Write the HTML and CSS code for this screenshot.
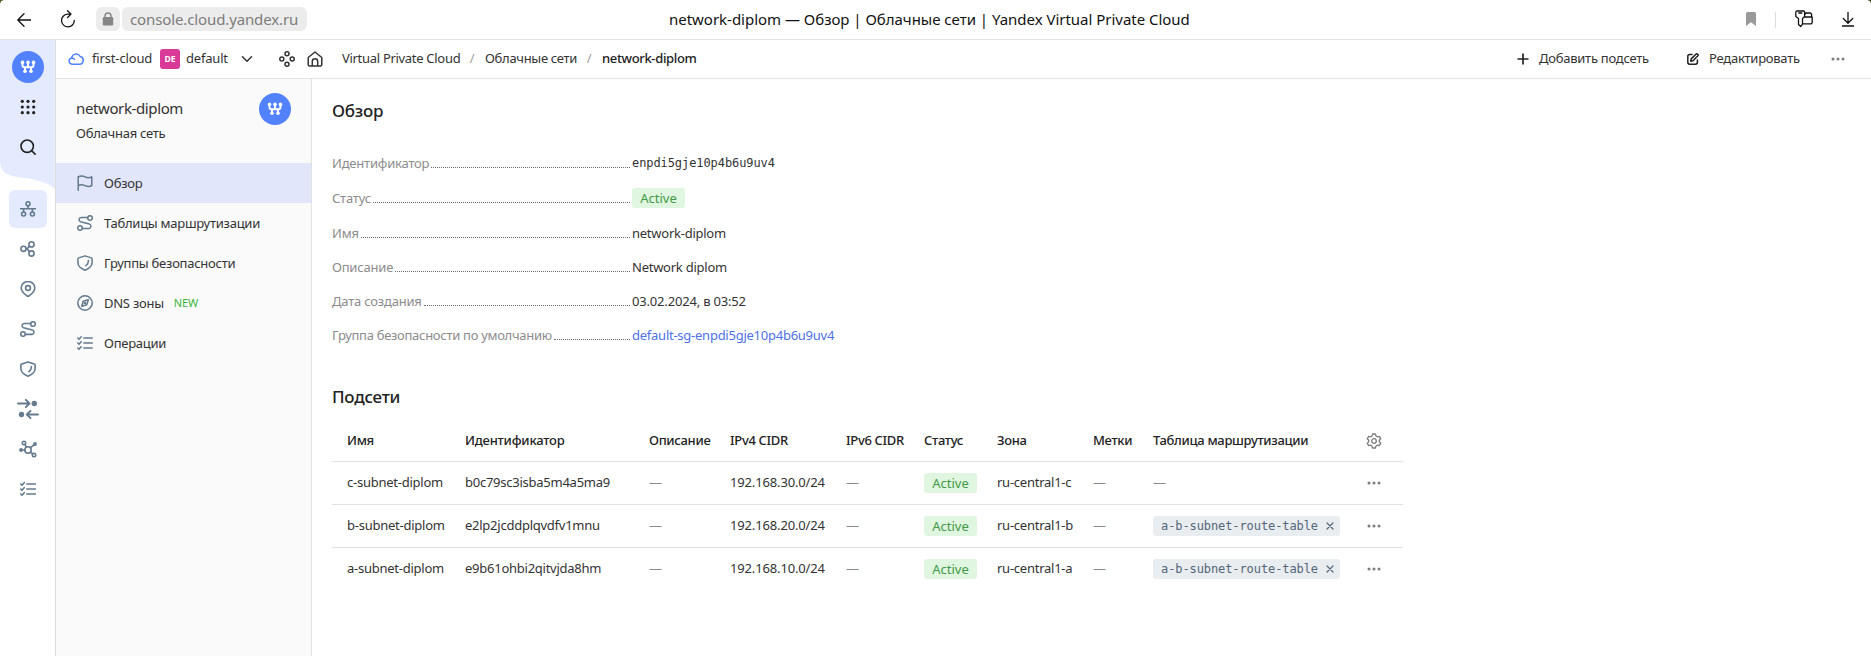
FILE: index.html
```html
<!DOCTYPE html>
<html lang="ru">
<head>
<meta charset="utf-8">
<title>network-diplom — Обзор</title>
<link rel="stylesheet" href="styles.css">
</head>
<body>
<svg class="sprite" aria-hidden="true">
  <symbol id="i-vpc" viewBox="0 0 32 32"><g fill="none" stroke="#fff" stroke-width="1.900"><path d="M10.500 11.500v2.700q0 2 2 2h7q2 0 2-2v-2.700M16 11.500v4.700M13 16v4M19 16v4"/></g><g fill="#fff"><circle cx="10.500" cy="11.400" r="1.800"/><circle cx="16" cy="11.400" r="1.800"/><circle cx="21.500" cy="11.400" r="1.800"/><circle cx="13" cy="20.300" r="1.800"/><circle cx="19" cy="20.300" r="1.800"/></g></symbol>
  <symbol id="i-net" viewBox="0 0 16 16"><circle cx="8" cy="2.700" r="2"/><circle cx="3.600" cy="13" r="2"/><circle cx="12.400" cy="13" r="2"/><path d="M8 4.700v3M.5 7.700h15M3.600 7.700V11M12.400 7.700V11"/></symbol>
  <symbol id="i-share" viewBox="0 0 16 16"><circle cx="3.500" cy="7.800" r="2.600"/><circle cx="11.500" cy="3.400" r="2.600"/><circle cx="11.500" cy="12.500" r="2.600"/><path d="M6.100 7.800h1.200L9.400 5M7.300 7.800l2 3"/></symbol>
  <symbol id="i-pin" viewBox="0 0 16 16"><path d="M8 15.600C5.500 13.800 1.200 11.300 1.200 7A6.800 6.500 0 0 1 14.800 7C14.800 11.300 10.500 13.800 8 15.600z"/><circle cx="8" cy="7" r="2.400"/></symbol>
  <symbol id="i-route" viewBox="0 0 16 16"><circle cx="13" cy="3" r="2.300"/><circle cx="3" cy="13" r="2.300"/><path d="M10.700 2.500H4.200a2.200 2.200 0 0 0-.6 4.300l8.800 2.300a2.200 2.200 0 0 1-.6 4.300H5.300"/></symbol>
  <symbol id="i-shield" viewBox="0 0 16 16"><path d="M8 .9 14.300 2.900Q15.100 3.200 15.100 4V7.500C15.100 11.500 11 14 8 15.200 5 14 .9 11.500 .9 7.500V4Q.9 3.200 1.700 2.900zM11.300 5.500C11.500 7.800 10.700 9.500 9 10.700"/></symbol>
  <symbol id="i-checks" viewBox="0 0 16 16"><path d="M6.800 3h8.500M6.800 8h8.500M6.800 13h8.500M.8 3l1.200 1.200L4.200 1.700M.8 8l1.200 1.200L4.200 6.700M.8 13l1.200 1.200 2.200-2.500"/></symbol>
  <symbol id="i-dots" viewBox="0 0 16 16"><g fill="currentColor" stroke="none"><circle cx="3" cy="8" r="1.500"/><circle cx="8" cy="8" r="1.500"/><circle cx="13" cy="8" r="1.500"/></g></symbol>
  <symbol id="i-x" viewBox="0 0 8 8"><path d="M1 1l6 6M7 1 1 7"/></symbol>
</svg>

<div class="browser">
  <i class="corner corner-l"></i><i class="corner corner-r"></i>
  <svg class="back ico thin" viewBox="0 0 14 14"><path d="M14 7H.8M7 .8.8 7 7 13.200"/></svg>
  <svg class="reload ico thin" viewBox="0 0 16 18"><path d="M7.500 4.100a6.400 6.400 0 1 0 6.800 6.400M7.300 4.100H11M7.500.8 11 4.100 7.600 7.500"/></svg>
  <span class="lock"><svg viewBox="0 0 12 14"><path d="M3 7V4a3 3 0 0 1 6 0v3" fill="none" stroke="#858585" stroke-width="1.400"/><rect x=".8" y="5" width="10.400" height="8.500" rx="1.300" fill="#858585"/></svg></span>
  <span class="url">console.cloud.yandex.ru</span>
  <span class="page-title">network-diplom — Обзор | Облачные сети | Yandex Virtual Private Cloud</span>
  <svg class="bookmark" viewBox="0 0 10 14"><path d="M0 1.500Q0 0 1.500 0h7Q10 0 10 1.500V14L5 10.300 0 14z" fill="#999"/></svg>
  <i class="vsep"></i>
  <svg class="key ico" viewBox="0 0 18 18"><path d="M1.500 1h7.300l.8 1v4.500L7.500 8.500v5.700l-1.800 2.400-2.200-2V8.500L.8 6.500V2zM3.800 3h3M10 4.300l1-1.300h4.300l1.300 1.300v2.300M8 13.800h8.200l1-1V7H9.600"/></svg>
  <svg class="download ico thin" viewBox="0 0 12 15"><path d="M6 0v11M1.300 6.500 6 11.200l4.700-4.700M0 14h12"/></svg>
</div>

<div class="app">
  <nav class="rail">
    <svg class="rail-wave" viewBox="0 0 55 150"><path d="M0 0H55V149C49 143 41 141 26 138C9 136.500 0 134 0 120z" fill="#e4ebff"/></svg>
    <a class="logo"><svg viewBox="0 0 32 32"><use href="#i-vpc"/></svg></a>
    <a class="slot dark"><svg viewBox="0 0 16 16" fill="currentColor"><circle cx="2.300" cy="2.300" r="1.600"/><circle cx="8" cy="2.300" r="1.600"/><circle cx="13.700" cy="2.300" r="1.600"/><circle cx="2.300" cy="8" r="1.600"/><circle cx="8" cy="8" r="1.600"/><circle cx="13.700" cy="8" r="1.600"/><circle cx="2.300" cy="13.700" r="1.600"/><circle cx="8" cy="13.700" r="1.600"/><circle cx="13.700" cy="13.700" r="1.600"/></svg></a>
    <a class="slot dark"><svg class="ico" viewBox="0 0 16 16"><circle cx="7.200" cy="7.200" r="6.200"/><path d="m11.700 11.700 3.400 3.400"/></svg></a>
    <div class="rail-items">
      <a class="slot active"><svg class="ico"><use href="#i-net"/></svg></a>
      <a class="slot"><svg class="ico"><use href="#i-share"/></svg></a>
      <a class="slot"><svg class="ico"><use href="#i-pin"/></svg></a>
      <a class="slot"><svg class="ico"><use href="#i-route"/></svg></a>
      <a class="slot"><svg class="ico"><use href="#i-shield"/></svg></a>
      <a class="slot"><svg class="ico big heavy" viewBox="0 0 22 22"><path d="M1 5.500h11M8.800 1.800l3.700 3.700-3.700 3.700M21 16.500H10M13.500 12.800 9.800 16.500l3.700 3.700"/><g fill="currentColor" stroke="none"><circle cx="17.300" cy="5.500" r="2.700"/><circle cx="4.500" cy="16.500" r="2.700"/></g></svg></a>
      <a class="slot"><svg class="ico hub" viewBox="0 0 18 18"><circle cx="9" cy="10" r="3.200"/><circle cx="5" cy="3" r="1.700"/><circle cx="15" cy="15" r="1.700"/><path d="m5.900 4.500 1.600 2.700M11.200 7.800 16 4M5.800 10H2M11.500 12.200l2.200 1.700"/><g fill="currentColor" stroke="none"><circle cx="16" cy="4" r="1.900"/><circle cx="2" cy="10" r="1.900"/></g></svg></a>
      <a class="slot"><svg class="ico"><use href="#i-checks"/></svg></a>
    </div>
  </nav>

  <div class="workspace">
    <header class="topbar">
      <svg class="cloud ico" viewBox="0 0 16 12"><path d="M4 11.200A3.200 3.200 0 0 1 3.600 4.900 4.600 4.600 0 0 1 12.200 3.500 3.900 3.900 0 0 1 11.600 11.200zM3.600 4.900a3.300 3.300 0 0 1 2.900 1.500"/></svg>
      <span class="cloud-name">first-cloud</span>
      <span class="folder-badge">DE</span>
      <span class="folder-name">default</span>
      <svg class="chev ico" viewBox="0 0 10 6"><path d="M.5.7 5 5.200 9.500.7"/></svg>
      <svg class="diamonds ico" viewBox="0 0 16 16"><circle cx="8" cy="2.800" r="2"/><circle cx="2.800" cy="8" r="2"/><circle cx="13.200" cy="8" r="2"/><circle cx="8" cy="13.200" r="2"/></svg>
      <svg class="home ico" viewBox="0 0 16 16"><path d="M1.200 6.500 8 1l6.800 5.500V13.500a1.500 1.500 0 0 1-1.500 1.500H2.700a1.500 1.500 0 0 1-1.500-1.500zM5.300 15V10.500a2.700 2.700 0 0 1 5.400 0V15"/></svg>
      <div class="crumbs"><span class="c1">Virtual Private Cloud</span><span class="slash">/</span><span class="c2">Облачные сети</span><span class="slash">/</span><b>network-diplom</b></div>
      <div class="actions">
        <a class="act"><svg class="ico plus" viewBox="0 0 12 12"><path d="M6 .5v11M.5 6h11"/></svg><span class="add-text">Добавить подсеть</span></a>
        <a class="act edit"><svg class="ico" viewBox="0 0 12 12"><path d="M5 1.500H2.700Q.8 1.500.8 3.400V9.300q0 1.900 1.900 1.900H8.500q1.900 0 1.900-1.900V7M4.200 5.900 9.100 1q.6-.5 1.200 0l.6.600q.5.600 0 1.200L6 7.700l-2.300.5z"/></svg><span class="edit-text">Редактировать</span></a>
        <svg class="more"><use href="#i-dots"/></svg>
      </div>
    </header>

    <div class="body">
      <aside class="side">
        <div class="side-head">
          <div><div class="side-title">network-diplom</div><div class="side-sub">Облачная сеть</div></div>
          <span class="logo"><svg viewBox="0 0 32 32"><use href="#i-vpc"/></svg></span>
        </div>
        <a class="item current"><svg class="ico" viewBox="0 0 16 16"><path d="M1.200 15.200V1.800C3.500.8 6 .9 8 1.900s4.500 1.300 6.800 0V10.500C12.500 12 10 11.600 8 10.600s-4.500-1.300-6.800.2"/></svg><span>Обзор</span></a>
        <a class="item"><svg class="ico"><use href="#i-route"/></svg><span>Таблицы маршрутизации</span></a>
        <a class="item"><svg class="ico"><use href="#i-shield"/></svg><span>Группы безопасности</span></a>
        <a class="item"><svg class="ico" viewBox="0 0 16 16"><circle cx="8" cy="8" r="7.200"/><path d="m11.300 4.700-1.500 5.100-5.100 1.500 1.500-5.100z"/><circle cx="8" cy="8" r=".6"/></svg><span>DNS зоны</span><em>NEW</em></a>
        <a class="item"><svg class="ico"><use href="#i-checks"/></svg><span>Операции</span></a>
      </aside>

      <main class="main">
        <h1>Обзор</h1>
        <dl class="props">
          <div><dt>Идентификатор</dt><dd class="mono">enpdi5gje10p4b6u9uv4</dd></div>
          <div><dt>Статус</dt><dd><span class="status">Active</span></dd></div>
          <div><dt>Имя</dt><dd>network-diplom</dd></div>
          <div><dt>Описание</dt><dd>Network diplom</dd></div>
          <div><dt>Дата создания</dt><dd class="date">03.02.2024, в 03:52</dd></div>
          <div><dt class="long">Группа безопасности по умолчанию</dt><dd class="link">default-sg-enpdi5gje10p4b6u9uv4</dd></div>
        </dl>
        <h2>Подсети</h2>
        <div class="table">
          <div class="row head"><span>Имя</span><span class="wide">Идентификатор</span><span>Описание</span><span>IPv4 CIDR</span><span>IPv6 CIDR</span><span>Статус</span><span>Зона</span><span>Метки</span><span>Таблица маршрутизации</span><svg class="gear ico" viewBox="0 0 16 16"><path d="M6.600 1h2.800l.6 2 1.300.8 2-.5 1.400 2.400L13.300 7.200v1.600l1.400 1.500-1.400 2.400-2-.5-1.300.8-.6 2H6.600L6 13l-1.300-.8-2 .5-1.400-2.400L2.700 8.800V7.200L1.300 5.700l1.400-2.400 2 .5L6 3z"/><circle cx="8" cy="8" r="2.300"/></svg></div>
          <div class="row"><span>c-subnet-diplom</span><span>b0c79sc3isba5m4a5ma9</span><i>—</i><span class="cidr">192.168.30.0/24</span><i>—</i><span class="status">Active</span><span>ru-central1-c</span><i>—</i><i>—</i><svg class="more"><use href="#i-dots"/></svg></div>
          <div class="row"><span>b-subnet-diplom</span><span>e2lp2jcddplqvdfv1mnu</span><i>—</i><span class="cidr">192.168.20.0/24</span><i>—</i><span class="status">Active</span><span>ru-central1-b</span><i>—</i><span class="tag">a-b-subnet-route-table<svg class="ico"><use href="#i-x"/></svg></span><svg class="more"><use href="#i-dots"/></svg></div>
          <div class="row"><span>a-subnet-diplom</span><span>e9b61ohbi2qitvjda8hm</span><i>—</i><span class="cidr">192.168.10.0/24</span><i>—</i><span class="status">Active</span><span>ru-central1-a</span><i>—</i><span class="tag">a-b-subnet-route-table<svg class="ico"><use href="#i-x"/></svg></span><svg class="more"><use href="#i-dots"/></svg></div>
        </div>
      </main>
    </div>
  </div>
</div>
</body>
</html>
```

FILE: styles.css
```css
* { box-sizing: border-box; }
body { margin: 0; height: 656px; display: flex; flex-direction: column; overflow: hidden; background: #fff; color: #333; font: 13px/18px "Noto Sans", "Open Sans", sans-serif; letter-spacing: -.25px; white-space: nowrap; }
svg { display: block; flex: none; }
.sprite { position: absolute; width: 0; height: 0; }
.ico { fill: none; stroke: currentColor; stroke-width: 1.5; stroke-linecap: round; stroke-linejoin: round; }
.thin { stroke-width: 1.3; }

/* browser chrome */
.browser { position: relative; flex: none; display: flex; align-items: center; height: 40px; border-bottom: 1px solid #e2e2e2; padding: 0 17px; color: #111; letter-spacing: 0; }
.corner { position: absolute; top: 0; width: 4px; height: 4px; }
.corner-l { left: 0; background: radial-gradient(circle at 4px 4px, transparent 3.5px, #50622b 4px); }
.corner-r { right: 0; background: radial-gradient(circle at 0 4px, transparent 3.5px, #50622b 4px); }
.back { width: 14px; height: 14px; }
.reload { width: 16px; height: 18px; margin: -2px 0 0 29px; }
.lock { width: 24px; height: 24px; margin: -1px 0 0 20px; border-radius: 6px; background: #ececec; display: grid; place-items: center; }
.lock svg { width: 12px; height: 14px; margin-top: -1px; }
.url { width: 185px; height: 24px; margin: -1px 0 0 2px; padding-left: 8px; border-radius: 6px; background: #ececec; color: #7c7c7c; font-size: 15px; line-height: 24px; letter-spacing: -.12px; }
.page-title { width: 520px; margin: -2px 0 0 362px; font-size: 15px; line-height: 24px; letter-spacing: -.02px; }
.bookmark { width: 10px; height: 14px; margin: -1px 0 0 auto; }
.vsep { width: 1px; height: 16px; margin-left: 19px; background: #ddd; }
.key { width: 18px; height: 18px; margin-left: 19px; margin-top: -2px; stroke-width: 1.3; }
.download { width: 12px; height: 15px; margin-left: 29px; }

.app { flex: 1; display: flex; min-height: 0; }
.rail { position: relative; flex: none; width: 56px; border-right: 1px solid #dcdcdc; padding-top: 11px; color: #647a8e; }
.rail-wave { position: absolute; left: 0; top: 0; width: 55px; height: 150px; }
.logo { position: relative; display: block; width: 32px; height: 32px; border-radius: 50%; background: #5282ff; }
.rail > .logo { margin: 0 0 5px 12px; }
.slot { position: relative; display: grid; place-items: center; width: 38px; height: 38px; margin: 0 0 2px 9px; border-radius: 6px; }
.slot svg { width: 16px; height: 16px; stroke-width: 1.6; }
.slot .big { width: 22px; height: 22px; }
.slot .heavy { stroke-width: 1.9; }
.slot .hub { width: 18px; height: 18px; }
.dark { color: #222; }
.rail-items { padding-top: 22px; }
.active { background: #e4ebff; }

.workspace { flex: 1; display: flex; flex-direction: column; }
.topbar { flex: none; display: flex; align-items: center; height: 39px; border-bottom: 1px solid #e2e2e2; padding-left: 12px; }
.topbar span, .topbar b { margin-top: -2px; }
.cloud { width: 16px; height: 12px; color: #5282ff; }
.topbar .cloud-name { width: 60px; margin-left: 8px; letter-spacing: -.15px; }
.topbar .folder-badge { width: 20px; height: 20px; margin: 0 6px 0 8px; border-radius: 3px; background: #da3a97; color: #fff; font: bold 8.5px/20px "Open Sans", sans-serif; text-align: center; letter-spacing: 0; }
.topbar .folder-name { width: 41px; letter-spacing: -.2px; }
.chev { width: 10px; height: 6px; margin: 0 27px 0 15px; overflow: visible; }
.diamonds, .home { width: 16px; height: 16px; margin-right: 12px; }
.crumbs { display: flex; margin-left: 7px; letter-spacing: -.3px; }
.c1 { width: 117px; }
.c2 { width: 91px; }
.slash { width: 26px; color: #a0a0a0; text-align: center; }
b { font-weight: 500; color: #222; letter-spacing: -.35px; }
.actions { display: flex; align-items: center; margin-left: auto; padding-right: 25px; }
.act { display: flex; align-items: center; }
.act svg { width: 12px; height: 12px; margin-right: 10px; color: #222; }
.plus { stroke-linecap: butt; stroke-width: 1.7; }
.add-text { width: 110px; }
.edit { margin-left: 38px; }
.edit-text { width: 92px; margin-right: 29px; }
.more { width: 16px; height: 16px; color: #7d7d7d; }

.body { flex: 1; display: flex; }
.side { flex: none; width: 256px; border-right: 1px solid #e2e2e2; background: #fafafa; }
.side-head { display: flex; justify-content: space-between; height: 84px; padding: 14px 20px 0; }
.side-title { padding-top: 5px; font-size: 15px; line-height: 20px; letter-spacing: -.38px; }
.side-sub { margin-top: 6px; }
.item { display: flex; align-items: center; height: 40px; padding-left: 21px; }
.item svg { width: 16px; height: 16px; margin-right: 11px; color: #647a8e; }
.current { background: #e1e6fa; }
em { margin-left: 10px; color: #3db53d; font: 11px/18px "Noto Sans", sans-serif; letter-spacing: -.15px; }

.main { flex: 1; padding: 21px 20px 0; }
h1, h2 { margin: 0; color: #222; font-size: 17px; line-height: 22px; font-weight: 500; }
.props { margin: 0; padding-top: 32px; }
.props > div { display: flex; align-items: center; margin-bottom: 16px; }
dt { display: flex; align-items: baseline; width: 300px; padding-right: 2px; color: #8c8c8c; letter-spacing: -.2px; }
.long { letter-spacing: -.29px; }
dt::after { content: ""; flex: 1; margin-left: 2px; border-bottom: 1px dotted #6d6d6d; }
dd { margin: 0; }
.date { letter-spacing: -.18px; }
.mono { font-family: "DejaVu Sans Mono", monospace; font-size: 12px; letter-spacing: -.08px; }
.link { color: #4d72e8; }
.status { display: block; width: 53px; height: 20px; border-radius: 3px; background: #e0f6e0; color: #3f9a45; text-align: center; line-height: 20px; letter-spacing: 0; }
h2 { margin-top: 42px; }
.table { width: 1071px; margin-top: 12px; }
.row { display: grid; grid-template-columns: 118px 184px 81px 116px 78px 73px 96px 60px 213px 16px; align-items: center; height: 43px; padding-left: 15px; border-bottom: 1px solid #e2e2e2; }
.row > span:not(.status):not(.tag), .row > i { margin-top: -2px; }
.row:last-child { border-bottom-color: transparent; }
.head { height: 42px; color: #222; font-weight: 500; letter-spacing: -.32px; }
.wide { letter-spacing: -.2px; }
.row i { color: #8c8c8c; font-style: normal; }
.cidr { letter-spacing: -.15px; }
.gear { width: 16px; height: 16px; color: #7d7d7d; stroke-width: 1.3; }
.tag { display: flex; align-items: center; justify-content: space-between; width: 187px; height: 20px; padding: 0 6px 0 8px; border-radius: 3px; background: #e9edf0; color: #53667a; font: 12px/20px "DejaVu Sans Mono", monospace; letter-spacing: -.09px; }
.tag svg { width: 8px; height: 8px; stroke-width: 1.2; }
```
